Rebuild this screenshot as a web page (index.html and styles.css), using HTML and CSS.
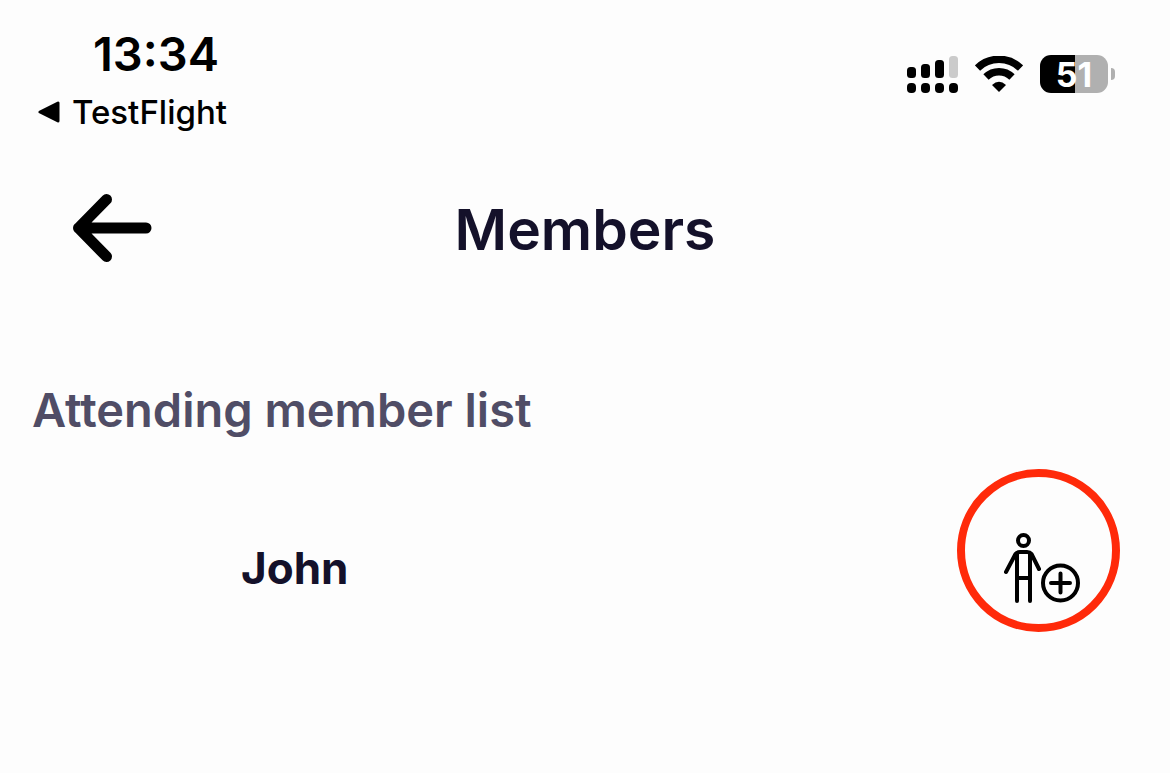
FILE: index.html
```html
<!DOCTYPE html>
<html lang="en">
<head>
  <meta charset="UTF-8" />
  <meta name="viewport" content="width=device-width, initial-scale=1.0" />
  <title>Members</title>
  <link rel="stylesheet" href="styles.css">
</head>
<body>
  <div class="status-bar">
    <div class="status-left">
      <div class="time">13:34</div>
      <a class="back-app" href="#">
        <svg width="22" height="22" viewBox="0 0 22 22" aria-hidden="true">
          <path d="M2 11 L20 2 V20 Z" stroke="#000" stroke-width="3" stroke-linejoin="round"/>
        </svg>
        TestFlight
      </a>
    </div>
    <div class="status-right">
      <svg width="51" height="38" viewBox="0 0 51 38" aria-label="Signal">
        <rect x="0" y="12" width="9" height="11" rx="3.5"/>
        <rect x="14" y="9" width="9" height="14" rx="3.5"/>
        <rect x="28" y="5" width="9" height="18" rx="3.5"/>
        <rect x="42" y="1" width="9" height="22" rx="3.5" fill="#cbcbcb"/>
        <rect x="0" y="28" width="9" height="10" rx="4"/>
        <rect x="14" y="28" width="9" height="10" rx="4"/>
        <rect x="28" y="28" width="9" height="10" rx="4"/>
        <rect x="42" y="28" width="9" height="10" rx="4"/>
      </svg>
      <svg width="48" height="36" viewBox="0 0 48 36" aria-label="Wi-Fi">
        <path d="M2.5 12 A31 31 0 0 1 45.5 12" fill="none" stroke="#000" stroke-width="7.5"/>
        <path d="M11 21 A18.5 18.5 0 0 1 37 21" fill="none" stroke="#000" stroke-width="7.5"/>
        <path d="M24 36 L17 29 Q24 22.5 31 29 Z"/>
      </svg>
      <div class="battery"><span class="battery-level">51</span></div>
    </div>
  </div>

  <header>
    <button class="back" aria-label="Back">
      <svg width="80" height="68" viewBox="0 0 80 68">
        <path d="M34.5 5.5 L6.5 34 L34.5 62.5 M6.5 34 H74" fill="none" stroke="#000" stroke-width="11" stroke-linecap="round" stroke-linejoin="round"/>
      </svg>
    </button>
    <h1>Members</h1>
  </header>

  <main>
    <h2>Attending member list</h2>
    <ul class="members">
      <li class="member">
        <span class="name">John</span>
        <button class="add" aria-label="Add companion">
          <svg width="76" height="72" viewBox="0 0 76 72" fill="none" stroke="#000" stroke-width="4" stroke-linecap="round" stroke-linejoin="round">
            <circle cx="19.5" cy="8.5" r="5.5"/>
            <path d="M2 40 L11.5 22 Q13 20 16 20 H23 Q26 20 27.5 22 L35 37"/>
            <path d="M13 22 V69 M26 22 V69 M13 46 H26"/>
            <circle cx="56.5" cy="51" r="17.5"/>
            <path d="M47 51 H66 M56.5 41.5 V60.5"/>
          </svg>
        </button>
      </li>
    </ul>
  </main>
</body>
</html>
```

FILE: styles.css
```css
*, *::before, *::after {
  box-sizing: border-box;
}
body {
  margin: 0;
  min-height: 100vh;
  background: #fdfdfd;
  color: #14112a;
  font-family: Inter, "Liberation Sans", sans-serif;
}
h1, h2 {
  margin: 0;
  font-weight: 600;
}
button {
  background: none;
  border: none;
  padding: 0;
  cursor: pointer;
}
svg {
  display: block;
}
.status-bar {
  display: flex;
  justify-content: space-between;
  align-items: center;
  padding: 16px 55px 0 38px;
  color: #000;
}
.status-left {
  display: flex;
  flex-direction: column;
}
.time {
  padding-left: 55px;
  font-size: 47px;
  font-weight: 600;
  line-height: 76px;
}
.back-app {
  display: flex;
  align-items: center;
  gap: 12px;
  color: #000;
  font-size: 33px;
  font-weight: 500;
  line-height: 40px;
  text-decoration: none;
}
.status-right {
  display: flex;
  align-items: center;
  gap: 17px;
}
.battery {
  position: relative;
  width: 68px;
  height: 38px;
  margin-right: 7px;
  border-radius: 11px;
  background: linear-gradient(to right, #000 51%, #b0b0b0 51%);
  color: #fff;
  font-size: 34px;
  font-weight: 700;
  line-height: 40px;
  text-align: center;
}
/* battery tip */
.battery::after {
  content: "";
  position: absolute;
  top: 13px;
  right: -7px;
  width: 4px;
  height: 12px;
  border-radius: 0 4px 4px 0;
  background: #b0b0b0;
}
header {
  display: grid;
  grid-template-columns: 1fr auto 1fr;
  align-items: center;
  padding: 54px 72px 0;
}
.back {
  justify-self: start;
  padding-bottom: 4px;
}
h1 {
  font-size: 57px;
  line-height: 88px;
}
main {
  padding: 104px 32px 120px;
}
h2 {
  color: #504d66;
  font-size: 47px;
  line-height: 64px;
}
.members {
  margin: 0;
  padding: 90px 0 0;
  list-style: none;
}
.member {
  display: flex;
  justify-content: space-between;
  align-items: center;
  padding: 0 58px 0 209px;
}
.name {
  font-size: 44px;
  font-weight: 700;
  line-height: 72px;
}
.add {
  position: relative;
}
/* red ring around the add button */
.add::after {
  content: "";
  position: absolute;
  top: -63px;
  right: -40px;
  width: 163px;
  height: 163px;
  border: 8px solid #ff2a0a;
  border-radius: 50%;
}
```
